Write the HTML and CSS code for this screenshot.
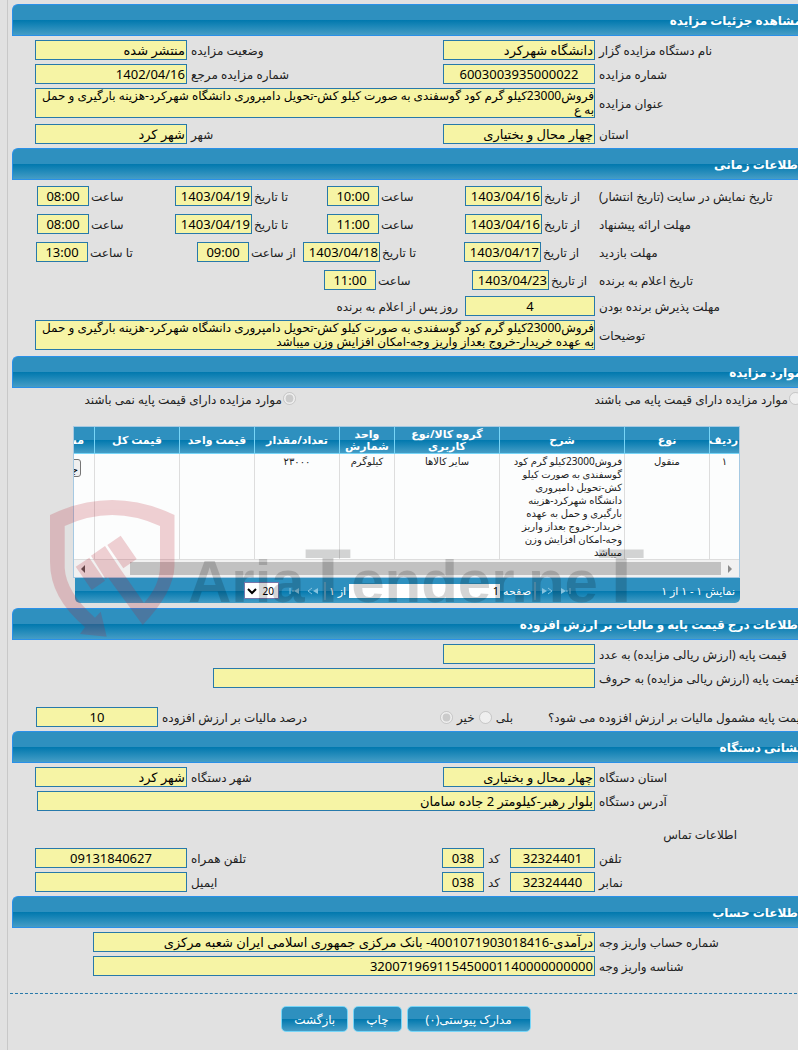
FILE: index.html
```html
<!DOCTYPE html>
<html lang="fa" dir="rtl">
<head>
    <meta charset="UTF-8">
    <meta name="viewport" content="width=device-width, initial-scale=1.0">
    <title>مشاهده جزئیات مزایده</title>
    <link rel="stylesheet" href="styles.css">
</head>
<body>
    <main class="page">

        <h2 class="title">مشاهده جزئیات مزایده</h2>
        <section class="section">
            <div class="row">
                <label class="name" for="org">نام دستگاه مزایده گزار</label>
                <div class="fields">
                    <input class="medium" id="org" value="دانشگاه شهرکرد" readonly>
                    <label class="name" for="status">وضعیت مزایده</label>
                    <input class="medium" id="status" value="منتشر شده" readonly>
                </div>
            </div>
            <div class="row">
                <label class="name" for="number">شماره مزایده</label>
                <div class="fields">
                    <input class="medium center" id="number" value="6003003935000022" readonly>
                    <label class="name" for="reference">شماره مزایده مرجع</label>
                    <input class="medium" id="reference" value="1402/04/16" readonly>
                </div>
            </div>
            <div class="row">
                <label class="name" for="subject">عنوان مزایده</label>
                <div class="fields">
                    <textarea id="subject" readonly>فروش23000کیلو گرم کود گوسفندی به صورت کیلو کش-تحویل دامپروری دانشگاه شهرکرد-هزینه بارگیری و حمل به ع</textarea>
                </div>
            </div>
            <div class="row place">
                <label class="name" for="province">استان</label>
                <div class="fields">
                    <input class="medium" id="province" value="چهار محال و بختیاری" readonly>
                    <label class="name" for="city">شهر</label>
                    <input class="medium" id="city" value="شهر کرد" readonly>
                </div>
            </div>
        </section>

        <h2 class="title">اطلاعات زمانی</h2>
        <section class="section times">
            <div class="row">
                <span class="name">تاریخ نمایش در سایت (تاریخ انتشار)</span>
                <div class="fields dates">
                    <label>از تاریخ <input class="date" value="1403/04/16" readonly></label>
                    <label>ساعت <input class="hour" value="10:00" readonly></label>
                    <label>تا تاریخ <input class="date" value="1403/04/19" readonly></label>
                    <label>ساعت <input class="hour" value="08:00" readonly></label>
                </div>
            </div>
            <div class="row">
                <span class="name">مهلت ارائه پیشنهاد</span>
                <div class="fields dates">
                    <label>از تاریخ <input class="date" value="1403/04/16" readonly></label>
                    <label>ساعت <input class="hour" value="11:00" readonly></label>
                    <label>تا تاریخ <input class="date" value="1403/04/19" readonly></label>
                    <label>ساعت <input class="hour" value="08:00" readonly></label>
                </div>
            </div>
            <div class="row">
                <span class="name">مهلت بازدید</span>
                <div class="fields dates visit">
                    <label>از تاریخ <input class="date" value="1403/04/17" readonly></label>
                    <label>تا تاریخ <input class="date" value="1403/04/18" readonly></label>
                    <label>از ساعت <input class="hour" value="09:00" readonly></label>
                    <label>تا ساعت <input class="hour" value="13:00" readonly></label>
                </div>
            </div>
            <div class="row">
                <span class="name">تاریخ اعلام به برنده</span>
                <div class="fields dates winner">
                    <label>از تاریخ <input class="date" value="1403/04/23" readonly></label>
                    <label>ساعت <input class="hour" value="11:00" readonly></label>
                </div>
            </div>
            <div class="row accept">
                <label class="name" for="days">مهلت پذیرش برنده بودن</label>
                <div class="fields">
                    <input class="days center" id="days" value="4" readonly>
                    <span class="unit">روز پس از اعلام به برنده</span>
                </div>
            </div>
            <div class="row notes">
                <label class="name" for="notes">توضیحات</label>
                <div class="fields">
                    <textarea id="notes" readonly>فروش23000کیلو گرم کود گوسفندی به صورت کیلو کش-تحویل دامپروری دانشگاه شهرکرد-هزینه بارگیری و حمل به عهده خریدار-خروج بعداز واریز وجه-امکان افزایش وزن میباشد</textarea>
                </div>
            </div>
        </section>

        <h2 class="title">موارد مزایده</h2>
        <section class="items">
            <div class="base">
                <label><input type="radio" name="base" disabled>موارد مزایده دارای قیمت پایه می باشند</label>
                <label><input type="radio" name="base" checked disabled>موارد مزایده دارای قیمت پایه نمی باشند</label>
            </div>

            <div class="grid">
                <div class="grid-view">
                    <table>
                        <colgroup>
                            <col class="c-row"><col class="c-kind"><col class="c-desc"><col class="c-group"><col class="c-unit">
                            <col class="c-amount"><col class="c-price"><col class="c-total"><col class="c-more">
                        </colgroup>
                        <thead>
                            <tr>
                                <th>ردیف</th>
                                <th>نوع</th>
                                <th>شرح</th>
                                <th>گروه کالا/نوع کاربری</th>
                                <th>واحد شمارش</th>
                                <th>تعداد/مقدار</th>
                                <th>قیمت واحد</th>
                                <th>قیمت کل</th>
                                <th class="start">مشاهده</th>
                            </tr>
                        </thead>
                        <tbody>
                            <tr>
                                <td>۱</td>
                                <td>منقول</td>
                                <td class="start">فروش23000کیلو گرم کود گوسفندی به صورت کیلو کش-تحویل دامپروری دانشگاه شهرکرد-هزینه بارگیری و حمل به عهده خریدار-خروج بعداز واریز وجه-امکان افزایش وزن میباشد</td>
                                <td>سایر کالاها</td>
                                <td>کیلوگرم</td>
                                <td>۲۳۰۰۰</td>
                                <td></td>
                                <td></td>
                                <td class="action"><button class="details" type="button">جزئیات</button></td>
                            </tr>
                        </tbody>
                    </table>
                    <div class="scrollbar">
                        <svg width="18" height="18" viewBox="0 0 18 18"><path d="M7 5v8l4-4z" fill="#8b8b8b"/></svg>
                        <div class="thumb"></div>
                        <svg width="18" height="18" viewBox="0 0 18 18"><path d="M11 5v8l-4-4z" fill="#505050"/></svg>
                    </div>
                </div>
                <div class="pager">
                    <span class="info">نمایش ۱ - ۱ از ۱</span>
                    <div class="pages">
                        <svg width="12" height="10" viewBox="0 0 12 10"><path d="M1 2l5 3-5 3z" fill="#86c3df"/><path d="M6 5h2M10 2v6" stroke="#86c3df"/></svg>
                        <svg width="12" height="10" viewBox="0 0 12 10"><path d="M1 2l5 3-5 3z" fill="#86c3df"/><path d="M7 2l4 3-4 3" fill="none" stroke="#86c3df"/></svg>
                        <i class="bar"></i>
                        <label for="pageno">صفحه</label>
                        <input id="pageno" class="pageno" value="1">
                        <span>از ۱</span>
                        <i class="bar"></i>
                        <svg width="12" height="10" viewBox="0 0 12 10"><path d="M11 2L6 5l5 3z" fill="#86c3df"/><path d="M5 2L1 5l4 3" fill="none" stroke="#86c3df"/></svg>
                        <svg width="12" height="10" viewBox="0 0 12 10"><path d="M11 2L6 5l5 3z" fill="#86c3df"/><path d="M6 5H4M2 2v6" stroke="#86c3df"/></svg>
                        <span class="size">
                            <select aria-label="تعداد در صفحه"><option>20</option></select>
                            <svg width="10" height="8" viewBox="0 0 10 8"><path d="M1 2l4 4 4-4" fill="none" stroke="#000" stroke-width="2"/></svg>
                        </span>
                    </div>
                </div>
            </div>

            <!-- watermark over the grid -->
            <svg class="watermark" width="640" height="140" viewBox="40 498 640 140">
                <g fill="#b91c2c" opacity="0.2">
                    <path d="M50 515Q112 485 174.500 515V566Q174 592 142.700 625L108 577.500 105.500 579 91 555.700 105 546 121 570 144 603Q160 585 160 566V526Q112 504 64.700 526V568Q66 592 95 617.700L100.700 611.700 106.700 636.700 80 634 85 627Q50 598 50 562z"/>
                    <path d="M75.700 566.700L89.300 557.700 105 580.700 91.700 590zM107.300 545L120.700 535.700 136.700 559 123.300 568.300z"/>
                </g>
                <text x="188" y="602" direction="ltr">Aria<tspan class="tall">T</tspan>ender.ne<tspan class="tall">T</tspan></text>
            </svg>
        </section>

        <h2 class="title">اطلاعات درج قیمت پایه و مالیات بر ارزش افزوده</h2>
        <section class="section">
            <div class="row">
                <label class="name" for="price">قیمت پایه (ارزش ریالی مزایده) به عدد</label>
                <div class="fields"><input class="medium" id="price" readonly></div>
            </div>
            <div class="row">
                <label class="name" for="words">قیمت پایه (ارزش ریالی مزایده) به حروف</label>
                <div class="fields"><input class="wide" id="words" readonly></div>
            </div>
            <div class="row vat">
                <span class="question">قیمت پایه مشمول مالیات بر ارزش افزوده می شود؟</span>
                <div class="answer">
                    <label for="yes">بلی</label><input type="radio" name="vat" id="yes" disabled>
                    <label for="no">خیر</label><input type="radio" name="vat" id="no" checked disabled>
                </div>
                <label class="name" for="percent">درصد مالیات بر ارزش افزوده</label>
                <input class="percent center" id="percent" value="10" readonly>
            </div>
        </section>

        <h2 class="title">نشانی دستگاه</h2>
        <section class="section">
            <div class="row">
                <label class="name" for="org-province">استان دستگاه</label>
                <div class="fields">
                    <input class="medium" id="org-province" value="چهار محال و بختیاری" readonly>
                    <label class="name" for="org-city">شهر دستگاه</label>
                    <input class="medium" id="org-city" value="شهر کرد" readonly>
                </div>
            </div>
            <div class="row">
                <label class="name" for="address">آدرس دستگاه</label>
                <div class="fields"><input class="full" id="address" value="بلوار رهبر-کیلومتر 2 جاده سامان" readonly></div>
            </div>
            <h3 class="contact">اطلاعات تماس</h3>
            <div class="row">
                <label class="name" for="phone">تلفن</label>
                <div class="fields">
                    <input class="phone center" id="phone" value="32324401" readonly>
                    <label class="code">کد <input class="center" value="038" readonly></label>
                    <label class="name" for="mobile">تلفن همراه</label>
                    <input class="medium center" id="mobile" value="09131840627" readonly>
                </div>
            </div>
            <div class="row">
                <label class="name" for="fax">نمابر</label>
                <div class="fields">
                    <input class="phone center" id="fax" value="32324440" readonly>
                    <label class="code">کد <input class="center" value="038" readonly></label>
                    <label class="name" for="email">ایمیل</label>
                    <input class="medium" id="email" readonly>
                </div>
            </div>
        </section>

        <h2 class="title">اطلاعات حساب</h2>
        <section class="section">
            <div class="row">
                <label class="name" for="account">شماره حساب واریز وجه</label>
                <div class="fields"><input class="account" id="account" value="درآمدی-4001071903018416- بانک مرکزی جمهوری اسلامی ایران شعبه مرکزی" readonly></div>
            </div>
            <div class="row">
                <label class="name" for="deposit">شناسه واریز وجه</label>
                <div class="fields"><input class="account" id="deposit" value="320071969115450001140000000000" readonly></div>
            </div>
        </section>

        <div class="actions">
            <button class="attachments" type="button">مدارک پیوستی(۰)</button>
            <button type="button">چاپ</button>
            <button type="button">بازگشت</button>
        </div>
    </main>
</body>
</html>
```
FILE: styles.css
```css
:root{
    --font: Tahoma, "Noto Sans", "DejaVu Sans", sans-serif;
    --bar: linear-gradient(#2e90bf 50%, #0078ae 50%, #459dc6);
    --field: #f6f4a5;
    --line: #2779aa;
}

*{
    box-sizing: border-box;
}

body{
    margin: 0;
    background-color: #e1e1e1;
    font-family: var(--font);
    font-size: 12px;
    color: #222;
}

/* the page is a little wider than the window, on the right */
.page{
    margin: 0 -4px 0 7px;
    padding-top: 4px;
    border-left: 1px solid #c8c8c8;
    min-height: 100vh;
}

.title{
    margin: 0 0 0 4px;
    height: 32px;
    line-height: 32px;
    border: 1px solid #2a90e8;
    border-right: 0;
    border-top-left-radius: 6px;
    background: var(--bar);
    color: white;
    font-size: 12px;
    font-weight: bold;
}

.section{
    display: flex;
    flex-direction: column;
    gap: 4px;
    padding: 4px 0 4px 27px;
}

.row{
    display: flex;
    align-items: center;
    white-space: nowrap;
}

.name{
    flex: 1;
    padding-left: 4px;
    text-align: left;
}

.fields{
    display: flex;
    align-items: center;
    flex: 0 0 560px;
}

input, textarea, select, button{
    margin: 0;
    font-family: var(--font);
}

input:not([type="radio"]), textarea{
    height: 20px;
    padding: 0 1px;
    border: 1px solid var(--line);
    border-radius: 0;
    background-color: var(--field);
    color: black;
    font-size: 13px;
}

textarea{
    display: block;
    width: 100%;
    height: 30px;
    padding: 0;
    line-height: 14px;
    font-size: 12px;
    resize: none;
    overflow: hidden;
}

input[type="radio"]{
    width: 13px;
    height: 13px;
}

input.center{
    text-align: center;
}

.medium{
    width: 152px;
}

.wide{
    width: 382px;
}

.full{
    width: 558px;
}

.account{
    width: 502px;
}

.place{
    margin-top: 2px;
}

/* dates */

.times{
    gap: 8px;
    padding: 6px 0 6px 27px;
}

.dates{
    display: grid;
    grid-template-columns: 130px 138px 152px 138px;
}

.dates.visit{
    grid-template-columns: 131px 161px 106px 161px;
}

.dates.winner{
    grid-template-columns: 123px 148px;
}

.dates label{
    display: flex;
    align-items: center;
    justify-content: flex-end;
    gap: 2px;
}

.dates .date{
    width: 77px;
}

.dates .hour{
    width: 52px;
    text-align: center;
}

.days{
    width: 130px;
}

.unit{
    padding-right: 7px;
}

.accept{
    margin-top: -2px;
}

.notes{
    margin-top: -4px;
}

/* items */

.items{
    position: relative;
    padding: 4px 0 5px 65px;
}

.base{
    display: flex;
    height: 34px;
}

.base label{
    display: flex;
    align-items: flex-start;
    flex: none;
    gap: 1px;
    width: 506px;
    line-height: 16px;
}

.base label + label{
    width: auto;
}

.grid{
    width: 667px;
    margin-right: 62px;
}

.grid-view{
    overflow: hidden;
    border: 1px solid #a6c9e2;
    background-color: #fcfdfd;
}

table{
    table-layout: fixed;
    width: 725px;
    border-collapse: separate;
    border-spacing: 0;
}

.c-row{ width: 30px; }
.c-kind{ width: 85px; }
.c-desc{ width: 125px; }
.c-group{ width: 105px; }
.c-unit{ width: 55px; }
.c-amount{ width: 85px; }
.c-price{ width: 75px; }
.c-total{ width: 85px; }
.c-more{ width: 80px; }

th{
    height: 27px;
    padding: 0 1px;
    border-left: 1px solid #77d5f7;
    border-bottom: 1px solid #77d5f7;
    background: var(--bar);
    color: white;
    font-size: 11px;
    line-height: 12px;
}

td{
    height: 104px;
    padding: 1px 2px 0;
    border-left: 1px solid #ddd;
    font-size: 10px;
    line-height: 13px;
    text-align: center;
    vertical-align: top;
}

th.start, td.start, td.action{
    text-align: right;
}

th.start{
    padding-right: 10px;
}

td.action{
    padding: 5px 13px 0 0;
}

.details{
    height: 18px;
    padding: 0 2px;
    border: 1px solid #767676;
    border-radius: 3px;
    background-color: #efefef;
    font-size: 11px;
}

.scrollbar{
    display: flex;
    align-items: center;
    height: 18px;
    border-top: 1px solid #ddd;
    background-color: #f1f1f1;
}

.thumb{
    width: 591px;
    height: 13px;
    margin-left: auto;
    background-color: #c1c1c1;
}

.pager{
    display: flex;
    align-items: center;
    height: 25px;
    margin-left: 2px;
    padding: 0 5px;
    border-radius: 0 0 5px 5px;
    background: var(--bar);
    color: white;
    font-size: 11px;
}

.info{
    flex: 0 0 161px;
}

.pages{
    display: flex;
    align-items: center;
    gap: 3px;
}

.pages > svg{
    margin: 0 2px;
}

.bar{
    width: 2px;
    height: 18px;
    background-color: #5b9fc0;
}

input.pageno:not([type="radio"]){
    width: 151px;
    height: 14px;
    border: 0;
    background-color: white;
    font-size: 11px;
}

.size{
    position: relative;
    margin-right: 4px;
}

.size select{
    display: block;
    width: 35px;
    height: 17px;
    padding: 0 4px 0 0;
    border: 1px solid #77a;
    background-color: white;
    appearance: none;
    font-size: 10px;
}

.size svg{
    position: absolute;
    left: 3px;
    top: 5px;
}

.watermark{
    position: absolute;
    left: 32px;
    top: 110px;
    pointer-events: none;
}

.watermark text{
    font-family: "Liberation Sans", Arial, sans-serif;
    font-size: 60px;
    font-weight: bold;
    fill: black;
    opacity: 0.16;
}

.watermark .tall{
    font-size: 76px;
}

/* price and address */

.vat{
    margin-top: 15px;
    padding-left: 1px;
}

.question{
    display: flex;
    flex: 1;
    justify-content: flex-end;
    min-width: 0;
}

.answer{
    display: flex;
    align-items: center;
    justify-content: flex-end;
    gap: 4px;
    width: 108px;
}

.vat .name{
    flex: 0 0 282px;
}

.percent{
    width: 122px;
}

.contact{
    margin: 11px 65px 0 0;
    font-size: 12px;
    font-weight: normal;
    line-height: 18px;
}

.phone{
    width: 85px;
}

.code{
    display: flex;
    align-items: center;
    gap: 4px;
    padding-right: 10px;
}

.code input{
    width: 42px;
}

/* bottom buttons */

.actions{
    display: flex;
    justify-content: center;
    gap: 5px;
    margin: 13px 0 0 2px;
    padding: 12px 0 17px;
    border-top: 1px dashed var(--line);
}

.actions button{
    height: 26px;
    padding: 0 12px;
    border: 1px solid #77d5f7;
    border-radius: 5px;
    background: var(--bar);
    color: white;
    font-size: 12px;
}

.actions .attachments{
    padding: 0 18px;
}
```
